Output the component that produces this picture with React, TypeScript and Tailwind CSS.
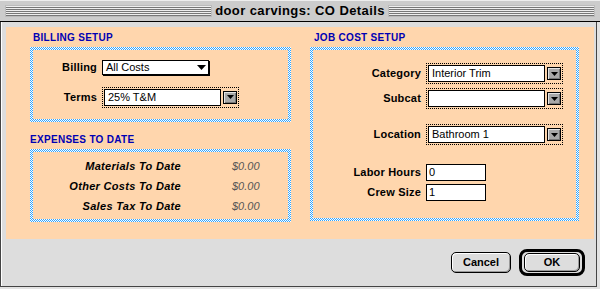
import type { ReactNode } from 'react';

const FONT = "font-['Liberation_Sans',Arial,sans-serif]";

function Checker({ className, children }: { className: string; children: ReactNode }) {
  return (
    <div
      className={`bg-[image:conic-gradient(#2fa4ff_90deg,#ffffff_90deg_180deg,#2fa4ff_180deg_270deg,#ffffff_270deg)] bg-[length:2px_2px] p-[3px] ${className}`}
    >
      <div className="h-full w-full bg-[#ffd6ad]">{children}</div>
    </div>
  );
}

function ArrowButton() {
  return (
    <div className="flex h-[13px] w-[14px] items-center justify-center border border-black bg-[#a8a8a8] shadow-[inset_1px_1px_0_#e4e4e4,inset_-1px_-1px_0_#777]">
      <svg width="7" height="4" viewBox="0 0 7 4">
        <polygon points="0,0 7,0 3.5,4" fill="#000" />
      </svg>
    </div>
  );
}

function Dropdown({ value }: { value: string }) {
  return (
    <div className="flex items-center gap-[2px] border border-dotted border-black p-[1px]">
      <div className="h-[17px] w-[117px] border border-black bg-white px-[3px] text-[11px] leading-[15px] text-black">
        {value}
      </div>
      <ArrowButton />
    </div>
  );
}

function Label({ width, children }: { width: string; children: ReactNode }) {
  return (
    <span className={`${width} shrink-0 text-right text-[11px] font-bold tracking-[0.2px] text-black`}>
      {children}
    </span>
  );
}

function Header({ children, pad }: { children: ReactNode; pad: string }) {
  return (
    <h2 className={`h-[12px] ${pad} text-[10px] font-bold uppercase leading-[12px] tracking-[0.3px] text-[#0000b4]`}>
      {children}
    </h2>
  );
}

const EXPENSES = [
  { label: 'Materials To Date', value: '$0.00' },
  { label: 'Other Costs To Date', value: '$0.00' },
  { label: 'Sales Tax To Date', value: '$0.00' },
];

const STRIPES =
  'h-[12px] flex-1 bg-[image:repeating-linear-gradient(to_bottom,#777_0px,#777_1px,#eeeeee_1px,#eeeeee_2px)] shadow-[inset_0_0_0_1px_#bbbbbb]';

export default function App() {
  return (
    <div className={`flex h-[289px] w-[600px] flex-col bg-[#e2e2e2] ${FONT}`}>
      {/* title bar */}
      <div className="flex h-[22px] shrink-0 items-center gap-[3px] border-b border-black bg-[#cccccc] px-[5px] shadow-[inset_0_1px_0_#eeeeee]">
        <div className={STRIPES} />
        <span className="text-[13px] font-bold leading-[16px] tracking-[0.4px] text-black">
          door carvings: CO Details
        </span>
        <div className={STRIPES} />
      </div>

      {/* window body */}
      <div className="flex h-[265px] w-[597px] flex-col border-b border-l border-r border-[#444] bg-[#dddddd] pl-[5px] pt-[5px] shadow-[inset_1px_0_0_#ffffff]">
        <div className="flex h-[212px] w-[588px] bg-[#ffd6ad] pl-[24px] pt-[5px]">
          {/* left column */}
          <div className="flex w-[261px] flex-col">
            <Header pad="pl-[3px]">Billing Setup</Header>
            <Checker className="mt-[3px] h-[75px] w-[261px]">
              <div className="flex flex-col pt-[9px]">
                <div className="flex items-center gap-[5px]">
                  <Label width="w-[64px]">Billing</Label>
                  <div className="flex h-[15px] w-[107px] items-center justify-between border border-black bg-white pl-[3px] pr-[2px] text-[11px] leading-[13px] text-black shadow-[1px_1px_0_#000]">
                    <span>All Costs</span>
                    <svg width="9" height="5" viewBox="0 0 9 5">
                      <polygon points="0,0 9,0 4.5,5" fill="#000" />
                    </svg>
                  </div>
                </div>
                <div className="mt-[11px] flex items-center gap-[5px]">
                  <Label width="w-[64px]">Terms</Label>
                  <Dropdown value="25% T&M" />
                </div>
              </div>
            </Checker>

            <div className="mt-[12px]">
              <Header pad="pl-0">Expenses To Date</Header>
            </div>
            <Checker className="mt-[3px] h-[73px] w-[261px]">
              <div className="flex flex-col pt-[4px]">
                {EXPENSES.map((row) => (
                  <div key={row.label} className="flex h-[20px] items-center">
                    <span className="w-[148px] text-right text-[11px] font-bold italic tracking-[0.3px] text-black">
                      {row.label}
                    </span>
                    <span className="ml-[51px] text-[11px] italic text-[#555555]">{row.value}</span>
                  </div>
                ))}
              </div>
            </Checker>
          </div>

          {/* right column */}
          <div className="ml-[19px] flex w-[269px] flex-col">
            <Header pad="pl-[4px]">Job Cost Setup</Header>
            <Checker className="mt-[3px] h-[174px] w-[269px]">
              <div className="flex flex-col pt-[13px]">
                <div className="flex items-center gap-[5px]">
                  <Label width="w-[108px]">Category</Label>
                  <Dropdown value="Interior Trim" />
                </div>
                <div className="mt-[4px] flex items-center gap-[5px]">
                  <Label width="w-[108px]">Subcat</Label>
                  <Dropdown value="" />
                </div>
                <div className="mt-[15px] flex items-center gap-[5px]">
                  <Label width="w-[108px]">Location</Label>
                  <Dropdown value="Bathroom 1" />
                </div>
                <div className="mt-[19px] flex items-center gap-[5px]">
                  <Label width="w-[108px]">Labor Hours</Label>
                  <div className="h-[17px] w-[60px] border border-black bg-white px-[2px] text-[11px] leading-[15px] text-black">
                    0
                  </div>
                </div>
                <div className="mt-[3px] flex items-center gap-[5px]">
                  <Label width="w-[108px]">Crew Size</Label>
                  <div className="h-[17px] w-[60px] border border-black bg-white px-[2px] text-[11px] leading-[15px] text-black">
                    1
                  </div>
                </div>
              </div>
            </Checker>
          </div>
        </div>

        {/* buttons */}
        <div className="flex flex-1 items-start justify-end gap-[8px] pr-[11px] pt-[10px]">
          <button
            type="button"
            className="mt-[3px] flex h-[21px] w-[60px] items-center justify-center rounded-[5px] border border-black bg-[#dddddd] text-[11px] font-bold text-black shadow-[inset_1px_1px_0_#ffffff,inset_-1px_-1px_0_#999999]"
          >
            Cancel
          </button>
          <div className="flex h-[27px] w-[66px] items-center justify-center rounded-[8px] border-[3px] border-black bg-[#dddddd] p-[1px]">
            <button
              type="button"
              className="flex h-[19px] w-[56px] items-center justify-center rounded-[5px] border border-black bg-[#dddddd] text-[11px] font-bold text-black shadow-[inset_1px_1px_0_#ffffff,inset_-1px_-1px_0_#999999]"
            >
              OK
            </button>
          </div>
        </div>
      </div>
    </div>
  );
}
